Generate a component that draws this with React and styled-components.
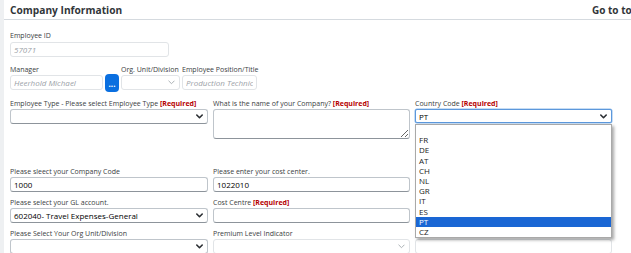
import React from "react";
import styled, { createGlobalStyle } from "styled-components";

const GlobalStyle = createGlobalStyle`
  html, body { margin: 0; padding: 0; }
  body {
    background: #eef0f2;
    font-family: "Open Sans", "Liberation Sans", sans-serif;
    color: #32363a;
    overflow: hidden;
  }
`;

const Card = styled.div`
  margin-left: 4px;
  width: calc(100vw - 4px);
  height: 253px;
  background: #ffffff;
  overflow: hidden;
`;

const Header = styled.div`
  width: 650px;
  height: 20px;
  box-sizing: border-box;
  padding: 0 6px;
  display: flex;
  align-items: center;
  border-bottom: 1px solid #d5dadf;
`;

const Title = styled.div`
  flex: 1;
  font-size: 10.2px;
  font-weight: 700;
  color: #32363a;
  line-height: 14px;
`;

const GoTop = styled.div`
  font-size: 10px;
  font-weight: 700;
  color: #32363a;
  white-space: nowrap;
  margin-right: 10px;
`;

const Body = styled.div`
  padding: 0 6px;
  position: relative;
`;

const Label = styled.div`
  box-sizing: border-box;
  font-size: 7px;
  line-height: 10px;
  height: 11px;
  padding-top: 1px;
  white-space: nowrap;
  color: #3a3e42;
  margin-bottom: ${(p) => p.$gap ?? 0}px;
`;

const Req = styled.span`
  color: #b50000;
  font-weight: 700;
`;

const Input = styled.input`
  box-sizing: border-box;
  display: block;
  width: ${(p) => p.$w || "100%"};
  height: ${(p) => p.$h || 15}px;
  margin: 0;
  padding: 0 3px;
  font-family: inherit;
  font-size: 8px;
  color: #000;
  background: #fff;
  border: 1px solid ${(p) => (p.$light ? "#e1e4e7" : "#bfc5cb")};
  border-bottom-color: ${(p) => (p.$light ? "#e1e4e7" : "#8d949b")};
  border-radius: 3px;
  outline: none;
  &::placeholder {
    color: #9ba1a7;
    font-style: italic;
  }
`;

const TextArea = styled.textarea`
  box-sizing: border-box;
  display: block;
  width: 100%;
  height: 30px;
  margin: 0;
  padding: 2px 3px;
  font-family: inherit;
  font-size: 8px;
  border: 1px solid #bfc5cb;
  border-bottom-color: #8d949b;
  border-radius: 3px;
  outline: none;
  resize: both;
`;

const SelectBox = styled.div`
  box-sizing: border-box;
  width: ${(p) => p.$w || "100%"};
  height: ${(p) => p.$h || 15}px;
  display: flex;
  align-items: center;
  justify-content: space-between;
  padding: 0 4px 0 3px;
  font-size: 8px;
  color: #000;
  background: #fff;
  border: 1px solid
    ${(p) => (p.$focus ? "#5c98dc" : p.$light ? "#e1e4e7" : "#bfc5cb")};
  border-bottom-color: ${(p) =>
    p.$focus ? "#5c98dc" : p.$light ? "#e1e4e7" : "#8d949b"};
  border-radius: ${(p) => (p.$focus ? 2 : 3)}px;
  box-shadow: ${(p) => (p.$focus ? "0 0 0 0.5px #8fbbea" : "none")};
`;

const Chevron = ({ light }) => (
  <svg width="7" height="5" viewBox="0 0 7 5">
    <path
      d="M0.8 1 L3.5 3.7 L6.2 1"
      fill="none"
      stroke={light ? "#a3a9ae" : "#2b2f33"}
      strokeWidth={light ? 0.9 : 1.6}
      strokeLinecap="round"
      strokeLinejoin="round"
    />
  </svg>
);

const Select = ({ value, light, focus, w, h }) => (
  <SelectBox $light={light} $focus={focus} $w={w} $h={h}>
    <span>{value}</span>
    <Chevron light={light} />
  </SelectBox>
);

const Field = styled.div`
  display: flex;
  flex-direction: column;
  position: relative;
  width: ${(p) => p.$w || "auto"};
`;

const TopField = styled(Field)`
  margin-top: 10px;
`;

const ManagerRow = styled.div`
  display: flex;
  align-items: flex-end;
  gap: 2px;
  margin-top: 7px;
`;

const DotsButton = styled.div`
  width: 14px;
  height: 18px;
  margin-bottom: -2px;
  border-radius: 4px;
  background: #0a6fe0;
  color: #fff;
  font-size: 8px;
  font-weight: 700;
  display: flex;
  align-items: center;
  justify-content: center;
  line-height: 1;
  padding-top: 2px;
  box-sizing: border-box;
`;

const Grid = styled.div`
  display: grid;
  grid-template-columns: 198px 197px 197px;
  column-gap: 5px;
  row-gap: 5px;
  align-items: start;
  margin-top: ${(p) => p.$mt}px;
`;

const Dropdown = styled.div`
  position: absolute;
  top: 26px;
  left: 0;
  width: 197px;
  box-sizing: border-box;
  background: #fff;
  border: 1px solid #a9a9a9;
  box-shadow: 2px 2px 3px rgba(0, 0, 0, 0.35);
  z-index: 5;
  padding: 0;
`;

const Option = styled.div`
  height: 10.2px;
  line-height: 10.2px;
  padding-left: 3px;
  font-size: 8px;
  color: ${(p) => (p.$active ? "#fff" : "#222")};
  background: ${(p) => (p.$active ? "#1a66d4" : "transparent")};
`;

const options = ["", "FR", "DE", "AT", "CH", "NL", "GR", "IT", "ES", "PT", "CZ"];

export default function App() {
  return (
    <>
      <GlobalStyle />
      <Card>
        <Header>
          <Title>Company Information</Title>
          <GoTop>Go to top</GoTop>
        </Header>
        <Body>
          <TopField>
            <Label $gap={1}>Employee ID</Label>
            <Input $w="159px" $light readOnly placeholder="57071" />
          </TopField>

          <ManagerRow>
            <Field $w="93px">
              <Label>Manager</Label>
              <Input $light readOnly placeholder="Heerhold Michael" />
            </Field>
            <DotsButton>...</DotsButton>
            <Field $w="59px">
              <Label>Org. Unit/Division</Label>
              <Select light value="" />
            </Field>
            <Field $w="75px">
              <Label>Employee Position/Title</Label>
              <Input $light readOnly placeholder="Production Technician" />
            </Field>
          </ManagerRow>

          <Grid $mt={8}>
            <Field>
              <Label>
                Employee Type - Please select Employee Type <Req>[Required]</Req>
              </Label>
              <Select value="" />
            </Field>
            <Field>
              <Label>
                What is the name of your Company? <Req>[Required]</Req>
              </Label>
              <TextArea readOnly />
            </Field>
            <Field>
              <Label>
                Country Code <Req>[Required]</Req>
              </Label>
              <Select focus value="PT" h={14} />
              <Dropdown>
                {options.map((o, i) => (
                  <Option key={i} $active={o === "PT"}>
                    {o}
                  </Option>
                ))}
              </Dropdown>
            </Field>
          </Grid>

          <Grid $mt={27}>
            <Field>
              <Label>Please sleect your Company Code</Label>
              <Input readOnly defaultValue="1000" />
            </Field>
            <Field>
              <Label>Please enter your cost center.</Label>
              <Input readOnly defaultValue="1022010" />
            </Field>
            <Field>
              <Label />
              <Input readOnly />
            </Field>

            <Field>
              <Label>Please select your GL account.</Label>
              <Select value="602040- Travel Expenses-General" />
            </Field>
            <Field>
              <Label>
                Cost Centre <Req>[Required]</Req>
              </Label>
              <Input readOnly />
            </Field>
            <Field>
              <Label />
              <Input readOnly />
            </Field>

            <Field>
              <Label>Please Select Your Org Unit/Division</Label>
              <Select value="" />
            </Field>
            <Field>
              <Label>Premium Level Indicator</Label>
              <Select light value="" />
            </Field>
            <Field>
              <Label />
              <Input $light readOnly />
            </Field>
          </Grid>
        </Body>
      </Card>
    </>
  );
}
